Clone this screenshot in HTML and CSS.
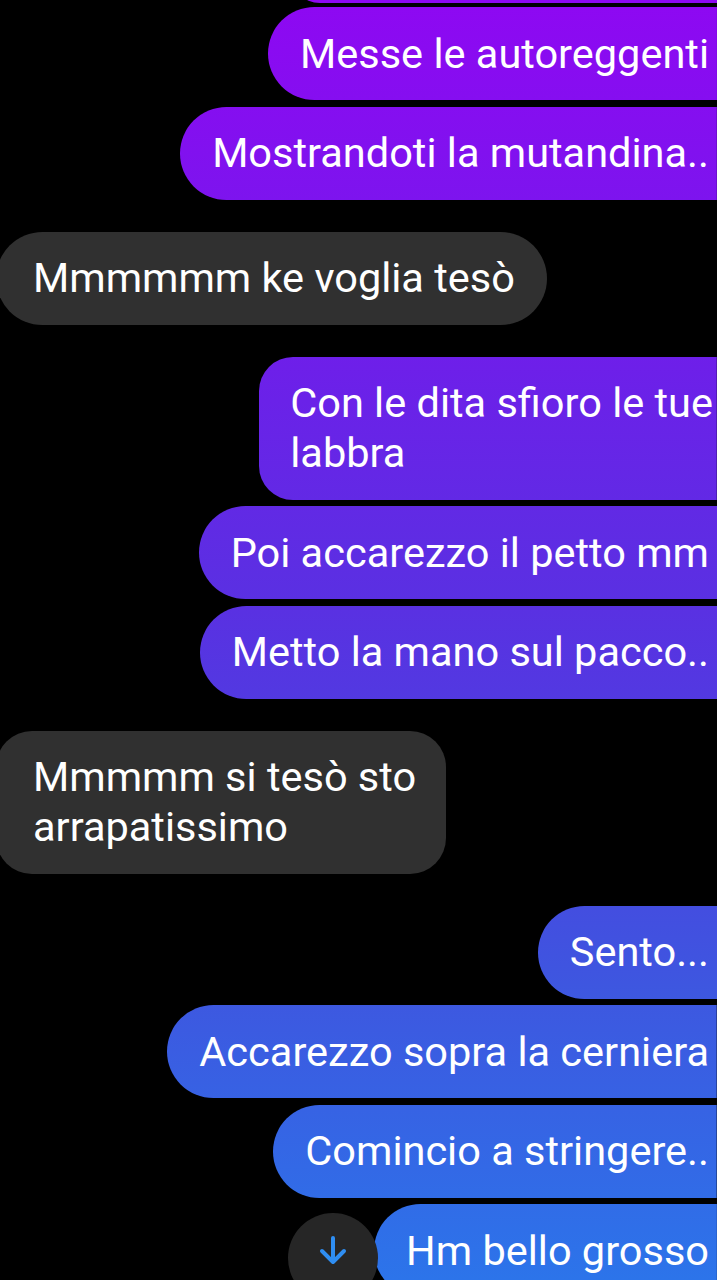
FILE: index.html
```html
<!DOCTYPE html>
<html lang="it">
<head>
<meta charset="utf-8">
<title>Chat</title>
<link rel="stylesheet" href="styles.css">
</head>
<body>
<main class="chat">
  <div class="peek"></div>
  <div class="group out">
    <div class="bubble">Messe le autoreggenti</div>
    <div class="bubble">Mostrandoti la mutandina..</div>
  </div>
  <div class="group in">
    <div class="bubble">Mmmmmm ke voglia tesò</div>
  </div>
  <div class="group out">
    <div class="bubble tall">Con le dita sfioro le tue<br>labbra</div>
    <div class="bubble">Poi accarezzo il petto mm</div>
    <div class="bubble">Metto la mano sul pacco..</div>
  </div>
  <div class="group in">
    <div class="bubble tall">Mmmmm si tesò sto<br>arrapatissimo</div>
  </div>
  <div class="group out">
    <div class="bubble">Sento...</div>
    <div class="bubble">Accarezzo sopra la cerniera</div>
    <div class="bubble">Comincio a stringere..</div>
    <div class="bubble">Hm bello grosso</div>
  </div>
  <button class="scroll-down" aria-label="Scorri in basso">
    <svg viewBox="0 0 40 40" width="40" height="40"><path d="M20 8 V31 M9 21 L20 32 L31 21" fill="none" stroke="#2f8ef2" stroke-width="4" stroke-linecap="round" stroke-linejoin="round"/></svg>
  </button>
</main>
</body>
</html>
```
FILE: styles.css
```css
html, body {
  margin: 0;
  padding: 0;
  background: #000;
  overflow: hidden;
  height: 1280px;
}
.chat {
  position: relative;
  font-family: Roboto, "Noto Sans", sans-serif;
  font-size: 41.5px;
  line-height: 50px;
  color: #fff;
  display: flex;
  flex-direction: column;
  gap: 32px;
  height: 1280px;
  overflow: hidden;
}
.peek {
  position: absolute;
  top: -40px;
  left: 290px;
  right: -30px;
  height: 43px;
  border-radius: 0 0 10px 30px;
  background: linear-gradient(180deg, #8e08f2 0px, #7d14ee 200px, #6a22e8 400px, #5a30e2 600px, #4a42e0 800px, #3d58e0 1000px, #2c74ea 1280px) fixed;
}
.group {
  display: flex;
  flex-direction: column;
  gap: 6.5px;
}
.group.out { align-items: flex-end; }
.chat > .group:nth-child(2) { margin-top: 7px; }
.bubble {
  padding: 21.5px 0;
  box-sizing: border-box;
  white-space: nowrap;
}
.out .bubble {
  margin-right: -30px;
  padding-left: 32px;
  padding-right: 38px;
  border-radius: 47px 10px 10px 47px;
  background: linear-gradient(180deg, #8e08f2 0px, #7d14ee 200px, #6a22e8 400px, #5a30e2 600px, #4a42e0 800px, #3d58e0 1000px, #2c74ea 1280px) fixed;
}
.out .tall {
  padding-left: 31px;
  padding-right: 34px;
  border-radius: 34px 10px 10px 34px;
}
.in .bubble {
  align-self: flex-start;
  margin-left: -4px;
  padding-left: 37px;
  padding-right: 32px;
  border-radius: 47px;
  background: #303030;
}
.in .tall {
  padding-right: 30px;
  border-radius: 36px;
}
.scroll-down {
  position: absolute;
  left: 288px;
  top: 1213px;
  width: 90px;
  height: 90px;
  border: 0;
  border-radius: 50%;
  background: #262626;
  padding: 17px 0 0;
  display: flex;
  align-items: flex-start;
  justify-content: center;
  box-sizing: border-box;
}
```
